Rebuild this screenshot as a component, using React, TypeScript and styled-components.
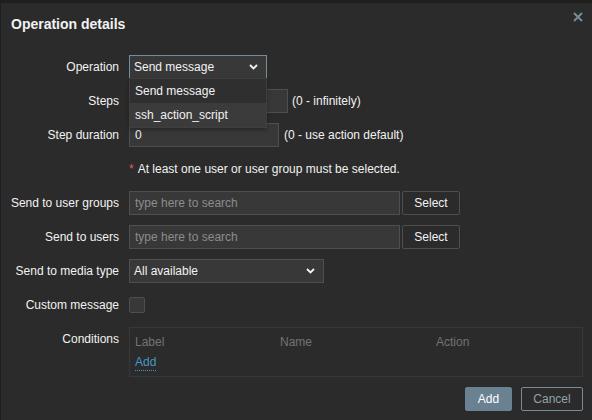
import React from "react";
import styled, { createGlobalStyle } from "styled-components";

const Global = createGlobalStyle`
  html, body { margin: 0; padding: 0; background: #1e1e1e; }
  body { font-family: "Liberation Sans", Arial, sans-serif; font-size: 12px; color: #f2f2f2; }
  * { box-sizing: border-box; }
`;

const Dialog = styled.div`
  margin: 3px 0 0 1px;
  height: 417px;
  background: #2b2b2b;
  position: relative;
  display: flex;
  flex-direction: column;
`;

const Header = styled.div`
  padding: 12px 11px 0 10px;
  height: 42px;
`;

const Title = styled.h4`
  margin: 0;
  font-size: 14px;
  font-weight: bold;
  line-height: 18px;
  color: #f2f2f2;
`;

const Close = styled.button`
  position: absolute;
  top: 6px;
  right: 6px;
  width: 16px;
  height: 16px;
  padding: 0;
  border: 0;
  background: transparent;
  display: flex;
  align-items: center;
  justify-content: center;
`;

const Form = styled.div`
  display: grid;
  grid-template-columns: 118px 1fr;
  column-gap: 10px;
  row-gap: 10px;
  padding-top: 10px;
  padding-right: 10px;
`;

const Label = styled.div`
  text-align: right;
  line-height: 24px;
  white-space: nowrap;
`;

const Field = styled.div`
  display: flex;
  align-items: center;
  gap: 4px;
  min-height: 24px;
  position: relative;
`;

const Input = styled.div<{ $w: number; $ml?: number }>`
  width: ${(p) => p.$w}px;
  margin-left: ${(p) => p.$ml ?? 0}px;
  height: 24px;
  background: #383838;
  border: 1px solid #4f4f4f;
  padding: 0 5px;
  line-height: 22px;
  color: #f2f2f2;
  flex: none;
`;

const Placeholder = styled.span`
  color: #8c8c8c;
`;

const Hint = styled.span<{ $ml?: number }>`
  margin-left: ${(p) => p.$ml ?? 0}px;
  white-space: nowrap;
`;

const SelectBox = styled.div<{ $w: number; $focus?: boolean }>`
  width: ${(p) => p.$w}px;
  height: 24px;
  background: #383838;
  border: 1px solid ${(p) => (p.$focus ? "#768d99" : "#4f4f4f")};
  padding: 0 8px 0 4px;
  display: flex;
  align-items: center;
  justify-content: space-between;
  color: #f2f2f2;
  flex: none;
`;

const DropList = styled.ul`
  position: absolute;
  left: 0;
  top: 23px;
  width: 138px;
  margin: 0;
  padding: 0;
  list-style: none;
  background: #2f2f2f;
  border: 1px solid #3f3f3f;
  z-index: 5;
  box-shadow: 0 2px 4px rgba(0, 0, 0, 0.3);
`;

const DropItem = styled.li<{ $hover?: boolean }>`
  height: 24px;
  line-height: 24px;
  padding: 0 5px;
  background: ${(p) => (p.$hover ? "#3b3b3b" : "transparent")};
`;

const Required = styled.div`
  grid-column: 2;
  line-height: 24px;
`;

const Star = styled.span`
  color: #e45959;
  margin-right: 4px;
`;

const Btn = styled.button<{ $w: number }>`
  width: ${(p) => p.$w}px;
  height: 24px;
  background: #2b2b2b;
  border: 1px solid #4f4f4f;
  border-radius: 2px;
  color: #f2f2f2;
  font: inherit;
  padding: 0;
  margin-left: -2px;
`;

const Check = styled.div`
  width: 16px;
  height: 16px;
  background: #383838;
  border: 1px solid #4f4f4f;
  border-radius: 2px;
`;

const CondBox = styled.div`
  width: 454px;
  height: 50px;
  border: 1px solid #383838;
  padding: 6px 5px 0;
`;

const CondHead = styled.div`
  display: grid;
  grid-template-columns: 145px 156px 1fr;
  color: #737373;
  line-height: 16px;
`;

const AddLink = styled.a`
  display: inline-block;
  margin-top: 5px;
  color: #4796c4;
  text-decoration: none;
  border-bottom: 1px dotted #4796c4;
  line-height: 15px;
`;

const Footer = styled.div`
  margin-top: auto;
  padding: 0 9px 9px 0;
  display: flex;
  justify-content: flex-end;
  gap: 9px;
`;

const Primary = styled.button<{ $w: number }>`
  width: ${(p) => p.$w}px;
  height: 24px;
  background: #6a8191;
  border: 1px solid #6a8191;
  border-radius: 2px;
  color: #ffffff;
  font: inherit;
  font-size: 12px;
`;

const Secondary = styled.button<{ $w: number }>`
  width: ${(p) => p.$w}px;
  height: 24px;
  background: transparent;
  border: 1px solid #768d99;
  border-radius: 2px;
  color: #8ea1ad;
  font: inherit;
  font-size: 12px;
`;

const Chevron = () => (
  <svg width="9" height="6" viewBox="0 0 9 6">
    <path d="M1 1l3.5 3.5L8 1" stroke="#f2f2f2" strokeWidth="1.8" fill="none" />
  </svg>
);

export default function App() {
  return (
    <>
      <Global />
      <Dialog>
        <Header>
          <Title>Operation details</Title>
        </Header>
        <Close aria-label="Close">
          <svg width="10" height="10" viewBox="0 0 10 10">
            <path d="M1 1l8 8M9 1l-8 8" stroke="#768d99" strokeWidth="2" />
          </svg>
        </Close>
        <Form>
          <Label>Operation</Label>
          <Field>
            <SelectBox $w={138} $focus>
              <span>Send message</span>
              <Chevron />
            </SelectBox>
            <DropList>
              <DropItem>Send message</DropItem>
              <DropItem $hover>ssh_action_script</DropItem>
            </DropList>
          </Field>

          <Label>Steps</Label>
          <Field>
            <Input $w={50} />
            <Input $w={50} $ml={55} />
            <Hint>(0 - infinitely)</Hint>
          </Field>

          <Label>Step duration</Label>
          <Field>
            <Input $w={150}>0</Input>
            <Hint $ml={1}>(0 - use action default)</Hint>
          </Field>

          <Required>
            <Star>*</Star>At least one user or user group must be selected.
          </Required>

          <Label>Send to user groups</Label>
          <Field>
            <Input $w={271}>
              <Placeholder>type here to search</Placeholder>
            </Input>
            <Btn $w={58}>Select</Btn>
          </Field>

          <Label>Send to users</Label>
          <Field>
            <Input $w={271}>
              <Placeholder>type here to search</Placeholder>
            </Input>
            <Btn $w={58}>Select</Btn>
          </Field>

          <Label>Send to media type</Label>
          <Field>
            <SelectBox $w={195}>
              <span>All available</span>
              <Chevron />
            </SelectBox>
          </Field>

          <Label>Custom message</Label>
          <Field>
            <Check />
          </Field>

          <Label>Conditions</Label>
          <Field>
            <CondBox>
              <CondHead>
                <span>Label</span>
                <span>Name</span>
                <span>Action</span>
              </CondHead>
              <AddLink>Add</AddLink>
            </CondBox>
          </Field>
        </Form>
        <Footer>
          <Primary $w={47}>Add</Primary>
          <Secondary $w={62}>Cancel</Secondary>
        </Footer>
      </Dialog>
    </>
  );
}
